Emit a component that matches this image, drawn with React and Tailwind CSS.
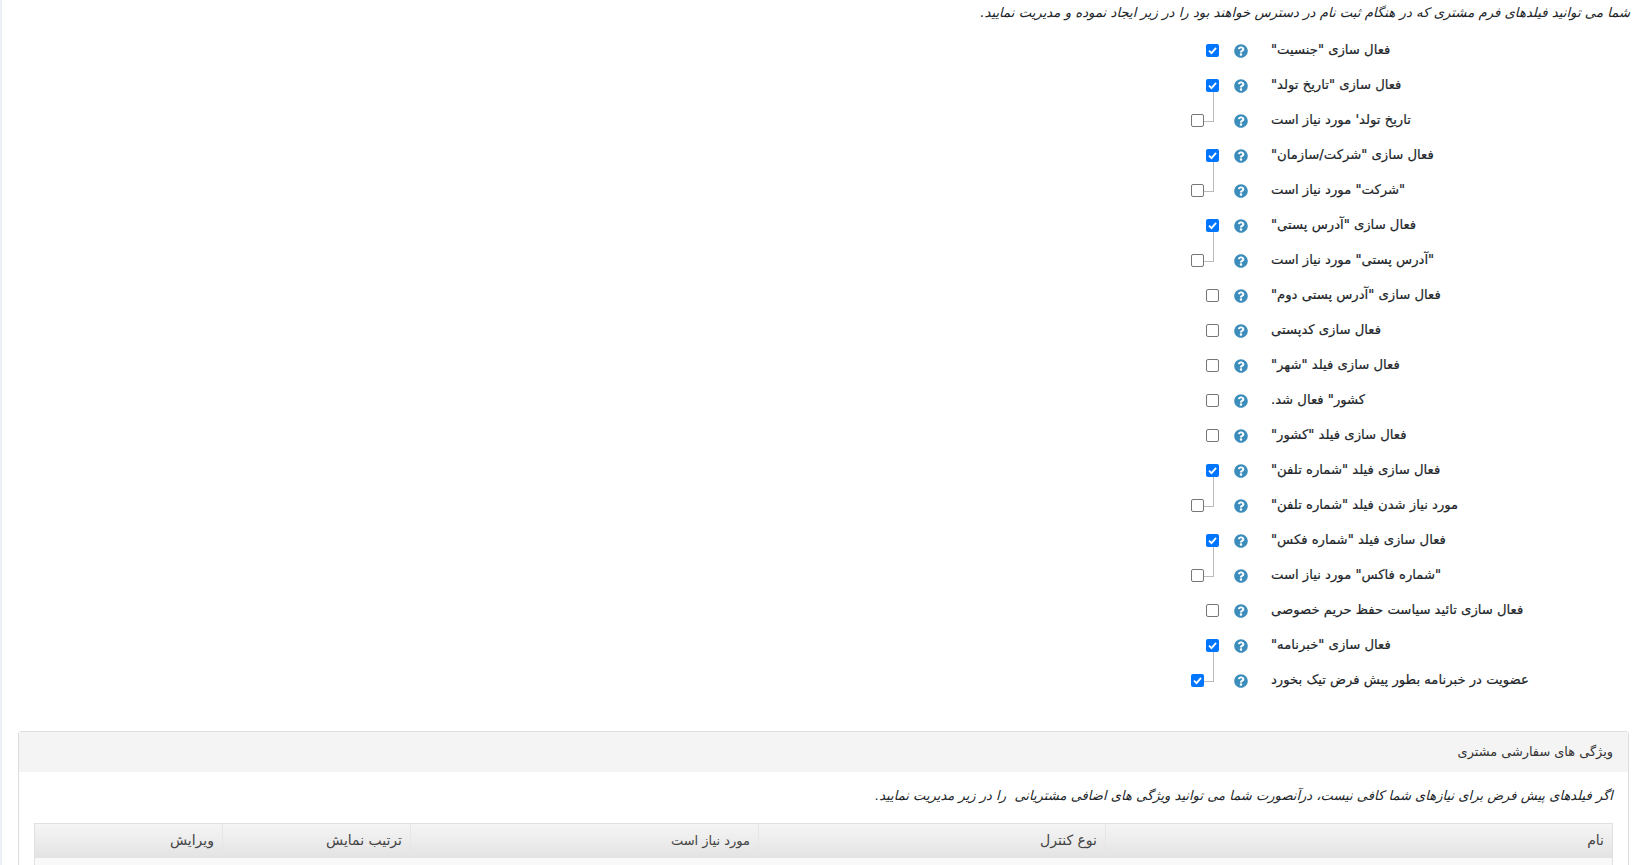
import React from "react";
import { FaQuestionCircle } from "react-icons/fa";

const rows = [
  { label: 'فعال سازی "جنسیت"', checked: true },
  { label: 'فعال سازی "تاریخ تولد"', checked: true },
  { label: "تاریخ تولد' مورد نیاز است", child: true },
  { label: 'فعال سازی "شرکت/سازمان"', checked: true },
  { label: '"شرکت" مورد نیاز است', child: true },
  { label: 'فعال سازی "آدرس پستی"', checked: true },
  { label: '"آدرس پستی" مورد نیاز است', child: true },
  { label: 'فعال سازی "آدرس پستی دوم"' },
  { label: "فعال سازی کدپستی" },
  { label: 'فعال سازی فیلد "شهر"' },
  { label: 'کشور" فعال شد.' },
  { label: 'فعال سازی فیلد "کشور"' },
  { label: 'فعال سازی فیلد "شماره تلفن"', checked: true },
  { label: 'مورد نیاز شدن فیلد "شماره تلفن"', child: true },
  { label: 'فعال سازی فیلد "شماره فکس"', checked: true },
  { label: '"شماره فاکس" مورد نیاز است', child: true },
  { label: "فعال سازی تائید سیاست حفظ حریم خصوصی" },
  { label: 'فعال سازی "خبرنامه"', checked: true },
  { label: "عضویت در خبرنامه بطور پیش فرض تیک بخورد", checked: true, child: true },
];

const columns = [
  { title: "نام", width: "w-[507px]", size: "text-[14px]" },
  { title: "نوع کنترل", width: "w-[347px]", size: "text-[14px]" },
  { title: "مورد نیاز است", width: "w-[348px]", size: "text-[13px]" },
  { title: "ترتیب نمایش", width: "w-[188px]", size: "text-[14px]" },
  { title: "ویرایش", width: "flex-1", size: "text-[14px]" },
];

const Checkbox = ({ checked }) =>
  checked ? (
    <span className="flex h-[13px] w-[13px] items-center justify-center rounded-[2px] bg-[#0075ff]">
      <svg viewBox="0 0 12 12" className="h-[11px] w-[11px]">
        <path d="M2.2 6.2 L4.9 8.9 L9.9 3.1" fill="none" stroke="#fff" strokeWidth="2" />
      </svg>
    </span>
  ) : (
    <span className="h-[13px] w-[13px] rounded-[2px] border border-[#767676] bg-white" />
  );

const Row = ({ label, checked, child }) => (
  <div dir="ltr" className="flex h-[35px] items-center">
    <div className={`relative flex w-[1232px] shrink-0 justify-end ${child ? "pr-[30px]" : "pr-[15px]"}`}>
      <Checkbox checked={checked} />
      {child && (
        <span className="absolute right-[20px] bottom-[5px] h-[30px] w-[10px] border-r border-b border-[#bbbbbb]" />
      )}
    </div>
    <FaQuestionCircle className="mt-[1px] h-[14px] w-[14px] text-[#3c8dbc]" />
    <div dir="rtl" className="mb-[1px] ml-[23px] text-left text-[13.2px] text-[#212529] [-webkit-text-stroke:0.2px_#212529]">
      {label}
    </div>
  </div>
);

export default function App() {
  return (
    <div dir="rtl" className="h-[865px] overflow-hidden bg-white font-['DejaVu_Sans',sans-serif] text-[#212529]">
      <div className="border-l-2 border-[#ecf0f5]">
        <div className="pt-[2px] pr-[11px] text-[13.25px] leading-[21px] italic">
          شما می توانید فیلدهای فرم مشتری که در هنگام ثبت نام در دسترس خواهند بود را در زیر ایجاد نموده و مدیریت نمایید.
        </div>
        <div className="mt-[10px]">
          {rows.map((row, i) => (
            <Row key={i} {...row} />
          ))}
        </div>
        <div className="mt-[33px] mr-[12px] ml-[16px] h-[200px] rounded-[3px] border border-[#dddddd]">
          <div className="flex h-[40px] items-center bg-[#f4f4f4] px-[15px] text-[12.9px] text-[#333333]">
            ویژگی های سفارشی مشتری
          </div>
          <div className="px-[15px] pt-[14px] text-[13.1px] italic">
            اگر فیلدهای پیش فرض برای نیازهای شما کافی نیست، درآنصورت شما می توانید ویژگی های اضافی مشتریانی&nbsp; را در زیر مدیریت نمایید.
          </div>
          <div className="mx-[15px] mt-[17px] border border-[#e0e0e0]">
            <div className="flex h-[34px] bg-gradient-to-b from-[#f5f5f5] to-[#e3e3e3] text-[#444444]">
              {columns.map((col) => (
                <div
                  key={col.title}
                  className={`flex items-center border-l border-[#e6e6e6] px-[8px] last:border-l-0 ${col.width} ${col.size}`}
                >
                  {col.title}
                </div>
              ))}
            </div>
            <div className="h-[40px] bg-[#f9f9f9]" />
          </div>
        </div>
      </div>
    </div>
  );
}
